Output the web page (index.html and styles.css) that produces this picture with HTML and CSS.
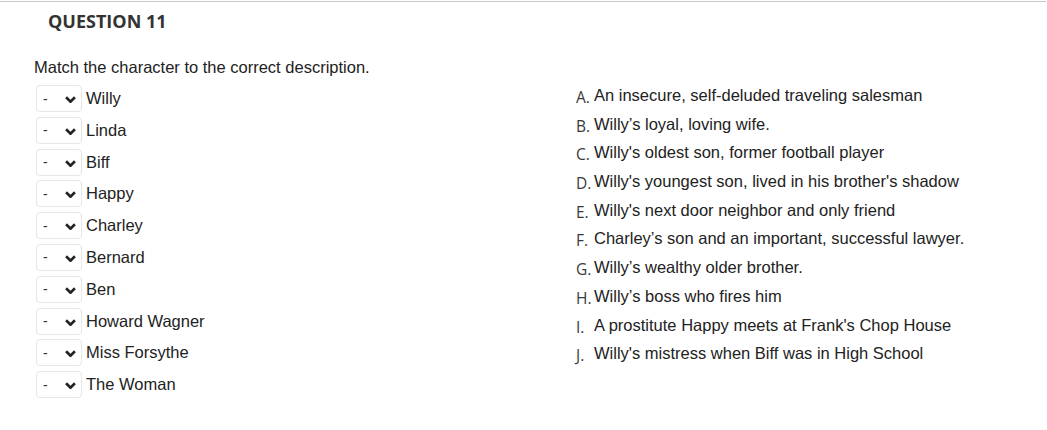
FILE: index.html
```html
<!DOCTYPE html>
<html lang="en">
  <head>
    <meta charset="UTF-8" />
    <title>Question 11</title>
    <link rel="stylesheet" href="styles.css">
  </head>
  <body>
    <div class="question">
      <h2>QUESTION 11</h2>
      <p class="prompt">Match the character to the correct description.</p>
      <div class="match">
        <div class="choices">
          <div class="choice"><span class="dd"><select><option>-</option></select><svg viewBox="0 0 10 6"><path d="M1 1l4 4 4-4"/></svg></span>Willy</div>
          <div class="choice"><span class="dd"><select><option>-</option></select><svg viewBox="0 0 10 6"><path d="M1 1l4 4 4-4"/></svg></span>Linda</div>
          <div class="choice"><span class="dd"><select><option>-</option></select><svg viewBox="0 0 10 6"><path d="M1 1l4 4 4-4"/></svg></span>Biff</div>
          <div class="choice"><span class="dd"><select><option>-</option></select><svg viewBox="0 0 10 6"><path d="M1 1l4 4 4-4"/></svg></span>Happy</div>
          <div class="choice"><span class="dd"><select><option>-</option></select><svg viewBox="0 0 10 6"><path d="M1 1l4 4 4-4"/></svg></span>Charley</div>
          <div class="choice"><span class="dd"><select><option>-</option></select><svg viewBox="0 0 10 6"><path d="M1 1l4 4 4-4"/></svg></span>Bernard</div>
          <div class="choice"><span class="dd"><select><option>-</option></select><svg viewBox="0 0 10 6"><path d="M1 1l4 4 4-4"/></svg></span>Ben</div>
          <div class="choice"><span class="dd"><select><option>-</option></select><svg viewBox="0 0 10 6"><path d="M1 1l4 4 4-4"/></svg></span>Howard Wagner</div>
          <div class="choice"><span class="dd"><select><option>-</option></select><svg viewBox="0 0 10 6"><path d="M1 1l4 4 4-4"/></svg></span>Miss Forsythe</div>
          <div class="choice"><span class="dd"><select><option>-</option></select><svg viewBox="0 0 10 6"><path d="M1 1l4 4 4-4"/></svg></span>The Woman</div>
        </div>
        <ol class="answers">
          <li><span class="letter">A.</span>An insecure, self-deluded traveling salesman</li>
          <li><span class="letter">B.</span>Willy’s loyal, loving wife.</li>
          <li><span class="letter">C.</span>Willy's oldest son, former football player</li>
          <li><span class="letter">D.</span>Willy's youngest son, lived in his brother's shadow</li>
          <li><span class="letter">E.</span>Willy's next door neighbor and only friend</li>
          <li><span class="letter">F.</span>Charley’s son and an important, successful lawyer.</li>
          <li><span class="letter">G.</span>Willy’s wealthy older brother.</li>
          <li><span class="letter">H.</span>Willy’s boss who fires him</li>
          <li><span class="letter">I.</span>A prostitute Happy meets at Frank's Chop House</li>
          <li><span class="letter">J.</span>Willy's mistress when Biff was in High School</li>
        </ol>
      </div>
    </div>
  </body>
</html>
```

FILE: styles.css
```css
body {
  margin: 0;
  background-color: #ffffff;
  font-family: "Liberation Sans", Arial, sans-serif;
  color: #222;
}

.question {
  margin-top: 1px;
  border-top: 1px solid #c8c8c8;
  margin-right: 1px;
}

h2 {
  font-family: "Open Sans", sans-serif;
  font-size: 18px;
  font-weight: 700;
  line-height: 24px;
  color: #333;
  margin: 7px 0 0 48px;
}

.prompt {
  font-size: 16.5px;
  line-height: 20px;
  margin: 24px 0 0 34px;
}

.match {
  display: flex;
  margin-top: 5px;
}

.choices {
  display: flex;
  flex-direction: column;
  gap: 4.8px;
  width: 540px;
  padding-left: 36px;
  margin-top: 3px;
}

.choice {
  display: flex;
  align-items: center;
  height: 27px;
  font-size: 16.5px;
}

.dd {
  position: relative;
  display: inline-block;
  margin-right: 4px;
}

.dd select {
  appearance: none;
  width: 46px;
  height: 27px;
  border: 1px solid #e6e6e6;
  border-radius: 4px;
  background: #fff;
  padding: 0 0 0 6px;
  font-family: "Liberation Sans", Arial, sans-serif;
  font-size: 14px;
  color: #333;
  display: block;
}

.dd svg {
  position: absolute;
  left: 29px;
  top: 11px;
  width: 11px;
  height: 7px;
  fill: none;
  stroke: #222;
  stroke-width: 2.4;
  pointer-events: none;
}

.answers {
  list-style: none;
  margin: 0;
  padding: 0;
}

.answers li {
  font-size: 16.5px;
  line-height: 28.7px;
  height: 28.7px;
}

.answers li:first-child {
  margin-top: -1px;
}

.letter {
  display: inline-block;
  width: 18px;
  font-family: "Open Sans", sans-serif;
  font-size: 15.5px;
  line-height: 1;
  color: #3a3a3a;
  position: relative;
  top: 2px;
}
```
